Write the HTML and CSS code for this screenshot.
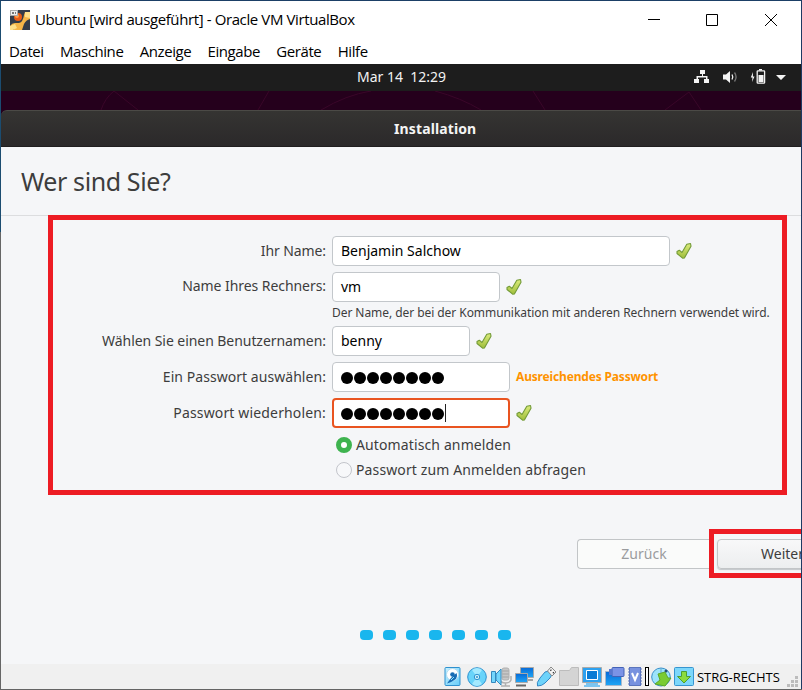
FILE: index.html
```
<!DOCTYPE html>
<html lang="de">
<head>
<meta charset="utf-8">
<title>Ubuntu [wird ausgeführt] - Oracle VM VirtualBox</title>
<link rel="stylesheet" href="styles.css">
</head>
<body>
<svg class="defs" width="0" height="0" aria-hidden="true">
  <defs>
    <linearGradient id="leaf" x1="0" y1="0" x2="0" y2="1"><stop offset="0" stop-color="#dcec7c"/><stop offset="1" stop-color="#9fbe3c"/></linearGradient>
    <linearGradient id="sky" x1="0" y1="0" x2="1" y2="1"><stop offset="0" stop-color="#c9f1ff"/><stop offset="1" stop-color="#66cdfa"/></linearGradient>
    <linearGradient id="blue" x1="0" y1="0" x2="0" y2="1"><stop offset="0" stop-color="#0869d6"/><stop offset="1" stop-color="#1fa6f5"/></linearGradient>
    <symbol id="check" viewBox="0 0 18 18"><path d="M2 9.500 4.300 8.200 7 10.500 11.800 2.200 15.500 1.500 16 4.200 9.400 16 7.600 16.200 2 11.500Z" fill="url(#leaf)" stroke="#739b38" stroke-width="1.100" stroke-linejoin="round"/></symbol>
  </defs>
</svg>
<div class="window">
  <header class="titlebar">
    <svg class="app-icon" width="20" height="20" viewBox="0 0 20 20">
      <rect width="20" height="20" fill="#353c49"/>
      <path d="M0 16Q2 13 5 13L9 13Q13 12 14 5L15 2H20V9Q16 10 14 14L12 20H3L5 18 0 17Z" fill="#f6b547"/>
      <path d="M15 2H20V8L15 7ZM0 16 5 14 7 18 3 20H0Z" fill="#ffe08a"/>
      <circle cx="8" cy="7" r="4" fill="#e65b16"/><circle cx="7" cy="6" r="2" fill="#ff9b45"/>
      <rect x=".5" y=".5" width="7" height="5" fill="#eee" stroke="#aaa"/><path d="M2 2h2v2H2zM5 2h1v2H5z" fill="#777"/>
    </svg>
    <span class="window-title">Ubuntu [wird ausgeführt] - Oracle VM VirtualBox</span>
    <svg class="controls" width="129" height="12" viewBox="0 0 129 12" fill="none" stroke="#000"><path d="M0 5.500h12M58.500.500h11v11h-11zM117 0l12 12M129 0l-12 12"/></svg>
  </header>
  <nav class="menu">
    <span>Datei</span><span>Maschine</span><span>Anzeige</span><span>Eingabe</span><span>Geräte</span><span>Hilfe</span>
  </nav>
  <div class="topbar">
    <span class="clock">Mar 14&nbsp; 12:29</span>
    <svg class="tray" width="94" height="16" viewBox="0 0 94 16" fill="#f4f4f4">
      <path d="M6 1h5v4H9v2h4.500v3H15v4h-5v-4h2V8.500H4V10h1v4H0v-4h2.500V7H8V5H6Z"/>
      <path d="M29 5.500h3L36 2v12l-4-3.500h-3z"/><path d="M38 5.500q1.600 2.500 0 5" fill="none" stroke="#f4f4f4" stroke-width="1.300"/><path d="M40.500 3.500q3.200 4.500 0 9" fill="none" stroke="#777" stroke-width="1.300"/>
      <path d="M59 3 56.800 8.500H58.500L58 13 60.500 7.500H58.900Z"/><path d="M65 0h3v1.500h-3z"/><rect x="63.200" y="1.800" width="7.400" height="12.400" rx=".7" fill="none" stroke="#f4f4f4" stroke-width="1.300"/><path d="M64.500 6h5v7h-5zM82 6h10l-5 5z"/>
    </svg>
  </div>
  <svg class="wallpaper" width="800" height="19" viewBox="0 0 800 19" fill="none" stroke="#3a0629"><path d="M100 19Q104 7 113 0L137 19M257 19l11-19M320 19Q345 4 370 0M434 0Q460 7 480 19M532 0l12 19M664 19 688 1l12 18"/></svg>
  <div class="dialog-bar"><span>Installation</span></div>
  <main class="page">
    <h1><span>Wer sind Sie?</span></h1>
    <form class="form">
      <label><span class="l1">Ihr Name:</span></label>
      <div class="field"><span class="input name"><span>Benjamin Salchow</span></span><svg class="check" width="18" height="18"><use href="#check"/></svg></div>
      <label class="raised"><span class="l2">Name Ihres Rechners:</span></label>
      <div class="field"><span class="input host"><span>vm</span></span><svg class="check" width="18" height="18"><use href="#check"/></svg></div>
      <div class="hint"><span>Der Name, der bei der Kommunikation mit anderen Rechnern verwendet wird.</span></div>
      <label><span class="l3">Wählen Sie einen Benutzernamen:</span></label>
      <div class="field"><span class="input user"><span>benny</span></span><svg class="check" width="18" height="18"><use href="#check"/></svg></div>
      <label><span class="l4">Ein Passwort auswählen:</span></label>
      <div class="field"><span class="input password"><i></i><i></i><i></i><i></i><i></i><i></i><i></i><i></i></span><span class="strength">Ausreichendes Passwort</span></div>
      <label><span class="l5">Passwort wiederholen:</span></label>
      <div class="field"><span class="input password focused"><i></i><i></i><i></i><i></i><i></i><i></i><i></i><i></i><b class="caret"></b></span><svg class="check" width="18" height="18"><use href="#check"/></svg></div>
      <div class="options">
        <div class="option"><i class="radio selected"></i><span>Automatisch anmelden</span></div>
        <div class="option"><i class="radio"></i><span>Passwort zum Anmelden abfragen</span></div>
      </div>
    </form>
    <div class="actions">
      <div class="button disabled"><span>Zurück</span></div>
      <div class="marked"><div class="button next"><span>Weiter</span></div></div>
    </div>
    <div class="steps"><i></i><i></i><i></i><i></i><i></i><i></i><i></i></div>
  </main>
  <footer class="status">
    <svg class="devices" width="251" height="22" viewBox="0 0 251 22">
      <g stroke="#2f91cf">
        <rect x="1" y="1.500" width="15" height="18" rx="1" fill="url(#sky)"/><ellipse cx="8.500" cy="8.500" rx="6" ry="6" fill="#fff" stroke="#b4dcf0"/><path d="M12.500 7Q14 11 11 13.500 8 16 3 17.500L7 12" fill="#176bb4" stroke="none"/><circle cx="8.500" cy="8.500" r="2.300" fill="#176bb4" stroke="none"/><path d="M10 11 7 14" stroke="#8be3fb"/>
        <circle cx="33" cy="11" r="9.300" fill="#69d4fa"/><path d="m33 11-5-7q5-4 10 0zM33 11l-5 7q5 4 10 0z" fill="#a4eaff" stroke="none"/><circle cx="33" cy="11" r="2.700" fill="#d9faff"/><circle cx="33" cy="11" r=".8" fill="#fff"/>
      </g>
      <g fill="#c7c7c7" stroke="#b0b0b0"><rect x="58" y="2" width="7" height="12" rx="2"/><path d="M56 10v4q1 3 5.500 3t5.500-3v-4M61.500 17v3M57 20h9M58 5h7M58 8h7M58 11h7" fill="none" stroke-width="1.500"/></g>
      <path d="M47.500 5.500h4v11h-4zM52 8l5-5v16l-5-5z" fill="#74d6fc" stroke="#3589bf"/>
      <g fill="url(#blue)" stroke="#a9a9a9"><path d="M76.500 1.500h13v10h-13z"/><path d="M83 14h6" stroke="#555"/><path d="M71.500 7.500h12v9h-12z"/><path d="M72 19.500h10" stroke="#666" stroke-width="2"/></g>
      <path d="M93.500 20Q92 17 96 12L101 6Q104 4 107 7 108 10 106 12L101 17Q98 20 93.500 20Z" fill="#6ed3fa" stroke="#3488c5"/><path d="m103.500 5 3.500-4 5 5-4 4z" fill="#f4f4f4" stroke="#888"/><path d="m106.500 3.800.8.800m1.700 1.700.8.800" stroke="#333" stroke-width="1.500"/>
      <path d="M115.500 19.500v-15h10l2-3h7v18z" fill="#d4d4d4" stroke="#bcbcbc"/>
      <path d="M138.500 1.500h19v15h-19z" fill="#2da1f0" stroke="#aaa"/><path d="M142.500 4.500h11v9h-11z" fill="#087bd5" stroke="#fff"/><path d="M142 18h12M140 20h16" stroke="#54b6ef" stroke-width="1.500"/>
      <path d="M161.500 5.500h16v14h-16z" fill="url(#blue)" stroke="#a8b8cc"/><rect x="168" y="1.500" width="12" height="9" rx="1" fill="#7b93e6" stroke="#4362b7"/><path d="M165 3h3v6h-3z" fill="#5876cf"/>
      <path d="M184 3h14M184 6h14M184 9h14M184 12h14M184 15h14M184 18h14" stroke="#5b75bd"/><rect x="185.500" y="1.500" width="11" height="18" fill="#7892df" stroke="#5b75bd"/><path d="m188 7 3 7 3-7" fill="none" stroke="#fff" stroke-width="2"/>
      <rect x="201.500" y="1.500" width="3" height="18" fill="#fff" stroke="#000"/>
      <ellipse cx="217" cy="11" rx="9.300" ry="9" fill="#9ce3fb" stroke="#388fcb"/><path d="M217 2v6" fill="none" stroke="#62a9d0"/><circle cx="222" cy="5" r="1.500" fill="#245078"/><path d="M214 8 221 6 224 12 227 12 221 20 211 18 216 14Z" fill="#7acb32" stroke="#5ba82a"/>
      <rect x="230.500" y="1.500" width="19" height="18" rx="1" fill="#7cd7fb" stroke="#3795d0"/><path d="M237.500 5.500h5v5h4L240 17l-6.500-6.500h4z" fill="#8bdc3c" stroke="#4c9f31"/>
    </svg>
    <span class="hostkey">STRG-RECHTS</span>
    <svg class="grip" width="11" height="11" viewBox="0 0 11 11" fill="#bcbcbc"><path d="M8 0h3v3H8zM4 4h3v3H4zM8 4h3v3H8zM0 8h3v3H0zM4 8h3v3H4zM8 8h3v3H8z"/></svg>
  </footer>
</div>
</body>
</html>
```
FILE: styles.css
```
* { box-sizing: border-box; }
body { margin: 0; width: 802px; height: 690px; overflow: hidden; }
.defs { position: absolute; }
.window { width: 802px; height: 690px; padding: 1px; display: flex; flex-direction: column; overflow: hidden; background: linear-gradient(#1b3f66, #1b3f66) top / 100% 1px no-repeat, linear-gradient(#646464, #646464) bottom / 100% 1px no-repeat, linear-gradient(#1b4c70 232px, #666 232px) left / 1px 100% no-repeat, linear-gradient(#1e3a63, #1e3a63) right / 1px 100% no-repeat, #25001c; font: 15px/20px "Noto Sans", sans-serif; color: #3d3d3d; white-space: nowrap; }
.titlebar { height: 37px; display: flex; align-items: center; padding: 0 24px 0 9px; color: #000; background: #fff; font-family: "Open Sans", sans-serif; flex: none; }
.app-icon { margin-right: 5px; }
.window-title { font-size: 15px; letter-spacing: -.39px; margin-top: -1px; }
.controls { margin-left: auto; overflow: visible; }
.menu { height: 26px; display: flex; align-items: center; color: #000; background: #fff; font-family: "Open Sans", sans-serif; padding: 0 0 0 8px; flex: none; gap: 16.3px; letter-spacing: -.42px; }
.topbar { height: 27px; background: #1d1d1d; color: #f2f2f2; display: flex; align-items: center; flex: none; padding: 0 13px 0 356px; font-size: 14px; }
.clock { margin-top: -2px; }
.tray { margin-left: auto; margin-top: -1px; }
.wallpaper { display: block; background: #25001c; flex: none; }
.dialog-bar { height: 37px; background: linear-gradient(#353432, #2b292a); border-top: 1px solid #4b4a46; border-bottom: 1px solid #201e1f; color: #f4f4f4; display: flex; align-items: center; padding-left: 393px; font-weight: 700; font-size: 14px; letter-spacing: .12px; border-radius: 6px 0 0; flex: none; }
.page { height: 517px; background: #f5f6f8; flex: none; }
h1 { margin: 0; height: 69px; border-bottom: 1px solid #dcdddf; display: flex; align-items: center; padding-left: 20px; font-size: 25px; letter-spacing: -.4px; font-weight: 400; }
.form { position: relative; margin: -1px 0 0 47px; width: 739px; height: 280px; border: 5px solid #ed1c24; background: #f5f6f8; padding: 16px 0 0; display: grid; grid-template-columns: 273px 1fr; grid-template-rows: 30px 30px 12px 30px 30px 30px 50px; gap: 6px; font-size: 14px; align-items: center; }
label { text-align: right; }
.raised { margin-top: -2px; }
.l1 { letter-spacing: -.1px; }
.l2, .l3 { letter-spacing: -.06px; }
.l4 { letter-spacing: .05px; }
.l5 { letter-spacing: .15px; }
.field { display: flex; align-items: center; }
.input { height: 30px; border: 1px solid #c3c7cb; border-radius: 4px; background: #fff; padding: 0 8px; display: flex; align-items: center; color: #000; }
.name { width: 338px; }
.host { width: 168px; }
.user { width: 138px; }
.password { width: 178px; gap: 1px; padding-top: 2px; }
.check { margin-left: 5px; }
.hint { grid-column: 2; font-size: 12px; line-height: 12px; letter-spacing: -.06px; margin-top: -2px; }
.password i { width: 12px; height: 12px; border-radius: 50%; background: #000; }
.focused { border: 2px solid #e95420; padding-left: 7px; }
.caret { width: 1px; height: 18px; background: #222; margin-top: -2px; }
.strength { margin-left: 6px; color: #ff9300; font-weight: 700; font-size: 12px; letter-spacing: -.17px; }
.options { grid-column: 2; padding-left: 4px; align-self: start; margin-top: -2px; letter-spacing: .12px; }
.option { height: 25px; display: flex; align-items: center; gap: 4px; }
.radio { width: 16px; height: 16px; border: 1px solid #c3c5cb; border-radius: 50%; background: #f7f8fa; }
.selected { border: 5px solid #3eb34f; background: #fff; }
.actions { height: 49px; margin-top: 34px; padding-left: 576px; display: flex; align-items: center; font-size: 14px; overflow: hidden; }
.button { width: 134px; height: 30px; border: 1px solid #c2c5c7; border-radius: 4px; display: flex; align-items: center; justify-content: center; background: linear-gradient(#f8f8f9, #eceeef); flex: none; }
.disabled { background: #fafbfa; color: #9a9c9e; width: 133px; border-right: 0; border-radius: 4px 0 0 4px; }
.marked { height: 49px; width: 150px; border: 5px solid #ed1c24; padding: 5px 0 0 3px; flex: none; margin-left: -1px; }
.next { box-shadow: 0 1px 1px #c3c7c9; padding-right: 3px; }
.steps { display: flex; gap: 10px; padding: 52px 0 0 359px; }
.steps i { width: 13px; height: 10px; background: #19b6ee; border-radius: 4px; }
.status { height: 25px; flex: none; background: #f0f0f0; display: flex; align-items: center; padding-left: 443px; font-family: "Open Sans", sans-serif; color: #000; }
.hostkey { font-size: 13px; margin-left: 2px; letter-spacing: -.05px; }
.grip { margin: 10px 3px 0 auto; }
```
